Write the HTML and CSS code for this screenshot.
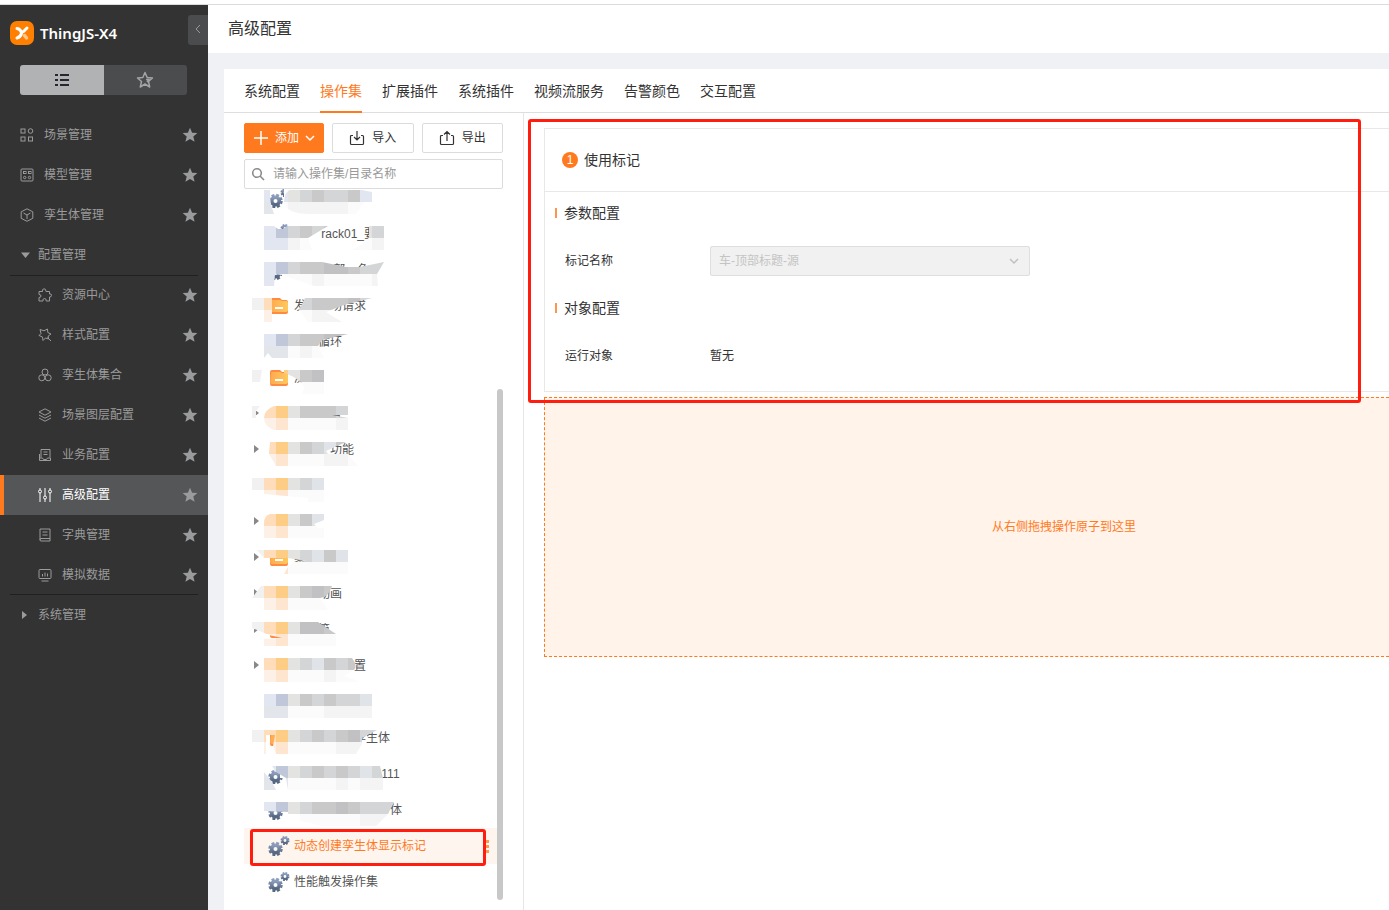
FILE: index.html
```html
<!DOCTYPE html>
<html lang="zh-CN">
<head>
<meta charset="utf-8">
<title>高级配置</title>
<link rel="stylesheet" href="styles.css">
</head>
<body>
<svg class="defs" aria-hidden="true">
  <defs>
    <linearGradient id="steel" x1="0" y1="0" x2="0" y2="1"><stop offset="0" stop-color="#8d9dbd"/><stop offset="1" stop-color="#53647f"/></linearGradient>
    <linearGradient id="amber" x1="0" y1="0" x2="1" y2="0"><stop offset="0" stop-color="#ffa94f"/><stop offset="1" stop-color="#ffc95c"/></linearGradient>
  </defs>
  <symbol id="star" viewBox="0 0 16 16"><path fill="currentColor" d="M8 .7l2.100 5 5.300.4-4.100 3.400 1.300 5.300L8 12l-4.600 2.800 1.300-5.300L.6 6.100l5.300-.4z"/></symbol>
  <symbol id="gears" viewBox="0 0 22 20">
    <g fill="none" stroke="url(#steel)"><circle cx="7.500" cy="13" r="3.800" stroke-width="3.600"/><circle cx="7.500" cy="13" r="5.900" stroke-width="2.600" stroke-dasharray="2.800 1.830"/><circle cx="17" cy="4.500" r="2.400" stroke-width="2"/><circle cx="17" cy="4.500" r="3.700" stroke-width="1.600" stroke-dasharray="1.800 1.100"/></g>
  </symbol>
  <symbol id="folder" viewBox="0 0 18 16"><path fill="#ff8a42" d="M0 2q0-2 2-2h8l2 2h4q2 0 2 2v10q0 2-2 2H2q-2 0-2-2z"/><path fill="url(#amber)" d="M1 3q0-1 1-1h8l2 1h4q2 0 2 2v7q0 2-2 2H2q-2 0-2-2z"/><path stroke="#fff" stroke-width="2" d="M5 10h8"/></symbol>
</svg>

<div class="app">
  <aside class="sidebar">
    <div class="brand">
      <svg class="logo" viewBox="0 0 24 24"><rect width="24" height="24" rx="7" fill="#ff8000"/><path fill="none" stroke="#fff" stroke-width="3" stroke-linecap="round" d="M7 7.500q3.500.5 4.700 4.500Q10.500 16 7 17M13.500 10.500l3.500-3.500"/><path stroke="#ffc58c" stroke-width="3.500" stroke-linecap="round" d="M14.500 14.500l2 2.500"/></svg>
      <span class="brand-name">ThingJS-X4</span>
      <button class="collapse" aria-label="收起"><svg viewBox="0 0 8 10"><path d="M6 1L2 5l4 4"/></svg></button>
    </div>
    <div class="switch">
      <button class="switch-on" aria-label="菜单"><svg viewBox="0 0 16 14" width="16" height="14"><path stroke="#26262e" stroke-width="2" d="M1 2h3M6 2h9M1 7h3M6 7h9M1 12h3M6 12h9"/></svg></button>
      <button aria-label="收藏"><svg viewBox="0 0 18 18" width="18" height="18"><path fill="none" stroke="#a3a4a6" stroke-width="1.500" stroke-linejoin="round" d="M9 1.500l2.200 5 5.300.5-4 3.500 1.200 5.500L9 13l-4.700 3 1.200-5.500-4-3.500 5.300-.5zM10 8.500h3l-2 2.500"/></svg></button>
    </div>
    <nav class="menu">
      <a class="item" href="#"><svg class="ico" viewBox="0 0 14 14"><rect x="1" y="1" width="4" height="4"/><circle cx="10.500" cy="3" r="2.300"/><rect x="1" y="9" width="4" height="4"/><rect x="8.500" y="9" width="4" height="4"/></svg><span>场景管理</span><svg class="star"><use href="#star"/></svg></a>
      <a class="item" href="#"><svg class="ico" viewBox="0 0 14 14"><rect x="1" y="1" width="12" height="12" rx="1"/><rect x="3.500" y="3.500" width="2.500" height="2"/><rect x="8.500" y="3.500" width="2.500" height="2"/><circle cx="4.700" cy="9.500" r="1.200"/><circle cx="9.500" cy="9.500" r="1.200"/></svg><span>模型管理</span><svg class="star"><use href="#star"/></svg></a>
      <a class="item" href="#"><svg class="ico" viewBox="0 0 14 14"><path d="M7 .8l5.800 3v6.500L7 13.300l-5.800-3V3.800zM3.500 5L7 7l3.500-2M7 7v4"/></svg><span>孪生体管理</span><svg class="star"><use href="#star"/></svg></a>
      <a class="item group" href="#"><svg class="caret" viewBox="0 0 10 10"><path d="M1 2.500h9L5.500 8z"/></svg><span>配置管理</span></a>
      <div class="submenu">
        <a class="item" href="#"><svg class="ico" viewBox="0 0 14 14"><path d="M1 3.500h3.500Q4 1 6 .8T8 3.500h3.500V6q2-.5 2 1.300T11.500 9v4H8.200q.3-2.500-1.700-2.500T5 13H1V9.500q2 0 2-1.500T1 6.500z"/></svg><span>资源中心</span><svg class="star"><use href="#star"/></svg></a>
        <a class="item" href="#"><svg class="ico" viewBox="0 0 14 14"><path d="M2 1.500l4 1.300L9.500 1l.3 3.500L13 6l-2.800 2 .3 3-3-1L5 12.500 4.500 9 1 7.500l2-2zM9.500 9.500L13 13"/></svg><span>样式配置</span><svg class="star"><use href="#star"/></svg></a>
        <a class="item" href="#"><svg class="ico" viewBox="0 0 14 14"><circle cx="7" cy="4" r="3"/><circle cx="3.800" cy="9.800" r="3"/><circle cx="10.200" cy="9.800" r="3"/></svg><span>孪生体集合</span><svg class="star"><use href="#star"/></svg></a>
        <a class="item" href="#"><svg class="ico" viewBox="0 0 14 14"><path d="M7 .8l6 3.200-6 3.200L1 4zM1 7l6 3.200L13 7M1 10l6 3.200L13 10"/></svg><span>场景图层配置</span><svg class="star"><use href="#star"/></svg></a>
        <a class="item" href="#"><svg class="ico" viewBox="0 0 14 14"><path d="M3 9.500V1.500h9v8M5.500 4h4M5.500 6.500h4M1.500 6v4M1.500 10h3l1 1.500h3l1-1.500h3v2.500h-11z"/></svg><span>业务配置</span><svg class="star"><use href="#star"/></svg></a>
        <a class="item active" href="#"><svg class="ico" viewBox="0 0 14 14"><path d="M2 0v2M2 5v9M7 0v8M7 11v3M12 0v2M12 5v9"/><circle cx="2" cy="3.500" r="1.500"/><circle cx="7" cy="9.500" r="1.500"/><circle cx="12" cy="3.500" r="1.500"/></svg><span>高级配置</span><svg class="star"><use href="#star"/></svg></a>
        <a class="item" href="#"><svg class="ico" viewBox="0 0 14 14"><path d="M2 12V1h10v12H3q-1 0-1-1 0-1.500 1-1.500h9M4.500 4h5M4.500 7h5"/></svg><span>字典管理</span><svg class="star"><use href="#star"/></svg></a>
        <a class="item" href="#"><svg class="ico" viewBox="0 0 14 14"><rect x="1" y="1.500" width="12" height="9" rx="1"/><path d="M3.500 13h7M4.500 6v2.500M7 4.500v4M9.500 5.500v3"/></svg><span>模拟数据</span><svg class="star"><use href="#star"/></svg></a>
      </div>
      <a class="item group" href="#"><svg class="caret" viewBox="0 0 10 10"><path d="M2 1v8l5-4z"/></svg><span>系统管理</span></a>
    </nav>
  </aside>

  <div class="page">
    <header class="page-head"><h1>高级配置</h1></header>
    <main class="panel">
      <nav class="tabs">
        <a href="#">系统配置</a><a class="current" href="#">操作集</a><a href="#">扩展插件</a><a href="#">系统插件</a><a href="#">视频流服务</a><a href="#">告警颜色</a><a href="#">交互配置</a>
      </nav>
      <div class="split">
        <section class="tree-pane">
          <div class="actions">
            <button class="primary"><svg viewBox="0 0 16 16" width="16" height="16"><path d="M8 1v14M1 8h14"/></svg>添加<svg viewBox="0 0 10 10" width="10" height="10"><path d="M1 3l4 4 4-4"/></svg></button>
            <button><svg viewBox="0 0 16 16" width="16" height="16"><path d="M4 5.500H2.500q-1 0-1 1v7q0 1 1 1h11q1 0 1-1v-7q0-1-1-1H12M8 1v9M5 7l3 3 3-3"/></svg>导入</button>
            <button><svg viewBox="0 0 16 16" width="16" height="16"><path d="M4 5.500H2.500q-1 0-1 1v7q0 1 1 1h11q1 0 1-1v-7q0-1-1-1H12M8 11V2M5 4.500l3-3 3 3"/></svg>导出</button>
          </div>
          <label class="search">
            <svg viewBox="0 0 14 14" width="14" height="14"><circle cx="6" cy="6" r="4.300"/><path d="M9 9l4 4"/></svg>
            <input type="text" placeholder="请输入操作集/目录名称" aria-label="请输入操作集/目录名称">
          </label>
          <div class="tree-wrap">
            <ul class="tree">
              <li><i></i><svg class="gears"><use href="#gears"/></svg><svg class="mask" data-cover="M32-2h8v14h-8z" data-top="-ddfghgghd" data-bottom="-nopppppoo" data-clip="M12 0h6q0 12 2 18l2 6H12zM32 12Q32-2 46-2h54l20 4v10h-8l-8 12H58Q34 24 32 12z"/></svg></li>
              <li><i></i><svg class="gears"><use href="#gears"/></svg><span>　　 rack01_要</span><svg class="mask" data-cover="M12 12h44v12H12z" data-top="-deghghggfgjp" data-bottom="-ddpoopoooppp" data-clip="M12 0h10l4 3h5l4-3H76L56 12 60 24H12zM117 0h15v24h-33q18-8 18-14z"/></svg></li>
              <li><i></i><svg class="gears"><use href="#gears"/></svg><span>　　　 部　色</span><svg class="mask" data-cover="M22-4h14v15H22zM30 12h90v12H30z" data-top="-deghhiihggh" data-bottom="-dooopooooppp" data-clip="M12 0H70L94 5H108L132 0 125 12 126 24H62L30 13 23 12l-1 12H12z"/></svg></li>
              <li><i></i><svg class="folder"><use href="#folder"/></svg><span>发　　场请求</span><svg class="mask" data-top="abcfghhhig" data-bottom="-looopppo" data-clip="M0 0H20V24H12V12H0zM53 0h67L92 7 74 14 90 24H56L47 12z"/></svg></li>
              <li><i></i><span class="no-icon">　　循环</span><svg class="mask" data-top="-deghhiig" data-bottom="-nnopooo" data-clip="M12 0H96L70 6 66 12 72 24H20l-4-5-4 5z"/></svg></li>
              <li><i></i><svg class="folder"><use href="#folder"/></svg><span>测</span><svg class="mask" data-top="abcfhigj" data-bottom="---oooppp" data-clip="M0 0h10L8 12H0zM32 0H72V24H50Q58 12 32 3z"/></svg></li>
              <li><i class="arrow"></i><span class="no-icon">　　　号</span><svg class="mask" data-cover="M4 0h8v5H4zM4 9h8v5H4z" data-top="abcfhhhg" data-bottom="-lmoooop" data-clip="M0 0H8L4 5v7H0zM22 0H96V9H80l16 3V24H22Q12 20 12 12T22 0z"/></svg></li>
              <li><i class="arrow"></i><span class="no-icon">　　　功能</span><svg class="mask" data-top="-bcfhgjhg" data-bottom="-lmoooppop" data-clip="M18 0H94L74 9 76 12H96L106 24H24L17 12z"/></svg></li>
              <li><svg class="mask" data-top="abcfgj" data-bottom="-lmooo" data-clip="M0 0H72V24H56V20L12 16V12H0z"/></svg></li>
              <li><i class="arrow"></i><span class="no-icon">　 -</span><svg class="mask" data-top="-bcfhj" data-bottom="-lmooo" data-clip="M18 0H72V6L62 10l4 4h6V24H12V9Q12 2 18 0z"/></svg></li>
              <li><i class="arrow"></i><svg class="folder"><use href="#folder"/></svg><span>集</span><svg class="mask" data-top="abcfgjhj" data-bottom="--mooooo" data-clip="M5 0H96V24H32L36 17 42 12 54 11 36 8H12z"/></svg></li>
              <li><i class="arrow"></i><span class="no-icon">　　动画</span><svg class="mask" data-top="abcfhih" data-bottom="-lmoooo" data-clip="M9 0H80Q76 12 68 12L76 24H12V12H0z"/></svg></li>
              <li><i class="arrow"></i><svg class="folder"><use href="#folder"/></svg><span>　　篇</span><svg class="mask" data-top="abcfiih" data-bottom="-lmoooo" data-clip="M0 0H66L84 12V24H12V17L30 16 17 13 0 6z"/></svg></li>
              <li><i class="arrow"></i><span class="no-icon">　　　　　置</span><svg class="mask" data-top="-bcfgjhgh" data-bottom="-lmooopoo" data-clip="M12 0H100Q106 8 102 12L92 18 108 24H12V8z"/></svg></li>
              <li><svg class="mask" data-top="-defhghggj" data-bottom="-nnooopppp" data-clip="M12 0H120V24H12z"/></svg></li>
              <li><i></i><svg class="folder"><use href="#folder"/></svg><span>　　　　　孪生体</span><svg class="mask" data-cover="M14 5h4v12h-4z" data-top="abcfghghigg" data-bottom="-lmoooopppo" data-clip="M0 0H125L110 8V14L104 24H24L21 16 23 5H14v19H12V12H0z"/></svg></li>
              <li><i></i><svg class="gears"><use href="#gears"/></svg><span>　　　　　　　 111</span><svg class="mask" data-cover="M12-4H36V2H12zM28 4h10v8H28z" data-top="-defghghgjg" data-bottom="-nnoooopoppp" data-clip="M12 6l8 10 4 8H12zM20 0H128l3 12V24H36L34 12 24 6z"/></svg></li>
              <li><i></i><svg class="gears"><use href="#gears"/></svg><span>　　　　　　　　体</span><svg class="mask" data-cover="M16-4h22v12H16z" data-top="-defghhihgggg" data-bottom="----oooooppp" data-clip="M12 0H142L136 12 124 24H70L36 16V10L12 9z"/></svg></li>
              <li class="selected"><i></i><svg class="gears"><use href="#gears"/></svg><span>动态创建孪生体显示标记</span><button class="more" aria-label="更多"></button><b class="frame"></b></li>
              <li><i></i><svg class="gears"><use href="#gears"/></svg><span>性能触发操作集</span></li>
            </ul>
            <div class="scroll-thumb"></div>
          </div>
        </section>

        <section class="editor">
          <article class="card">
            <header><b class="num">1</b><h2>使用标记</h2></header>
            <div class="card-body">
              <h3>参数配置</h3>
              <div class="field">
                <label for="mark">标记名称</label>
                <div class="select"><select id="mark" disabled><option>车-顶部标题-源</option></select><svg viewBox="0 0 10 10" width="10" height="10"><path d="M1 3l4 4 4-4"/></svg></div>
              </div>
              <h3>对象配置</h3>
              <div class="field"><span>运行对象</span><span>暂无</span></div>
            </div>
          </article>
          <div class="drop">从右侧拖拽操作原子到这里</div>
          <div class="frame frame-large"></div>
        </section>
      </div>
    </main>
  </div>
</div>
<script src="mask.js"></script>
</body>
</html>
```
FILE: styles.css
```css
* { box-sizing: border-box; }
body {
  margin: 0;
  background: #fff;
  color: #333;
  font: 12px/20px "Liberation Sans", "Noto Sans CJK SC", sans-serif;
  overflow: hidden;
}
h1, h2, h3 { margin: 0; font-weight: 400; }
a { color: inherit; text-decoration: none; }
button, input, select { font: inherit; color: inherit; }
.defs { position: absolute; width: 0; height: 0; }
.app { display: flex; height: 100vh; padding-top: 4px; }
.app::before { content: ""; position: absolute; top: 4px; left: 0; right: 0; height: 1px; background: #dcdcdc; }

.sidebar { width: 208px; flex: none; margin-top: 1px; background: #333; color: #9b9b9b; }
.brand { display: flex; align-items: center; height: 60px; padding: 0 0 4px 10px; }
.logo { width: 24px; height: 24px; margin-right: 6px; }
.brand-name { flex: 1; color: #fff; font: 600 15px/20px "Noto Sans", sans-serif; }
.collapse { width: 20px; height: 30px; margin-bottom: 6px; padding: 0; border: 0; border-radius: 3px 0 0 3px; background: #4b4c4e; }
.collapse svg { width: 8px; height: 10px; fill: none; stroke: #999; }
.switch { display: flex; margin: 0 21px 20px 20px; height: 30px; border-radius: 3px; overflow: hidden; }
.switch button { display: flex; flex: 1; align-items: center; justify-content: center; padding: 0; border: 0; background: #4b4c4e; }
.switch .switch-on { background: #b1b2b4; }
.item { display: flex; align-items: center; height: 40px; padding: 0 10px 0 20px; }
.item span { flex: 1; margin-left: 10px; }
.ico { width: 14px; height: 14px; fill: none; stroke: currentColor; }
.star { width: 16px; height: 16px; color: #999b9d; }
.caret { width: 10px; height: 10px; fill: currentColor; }
.group span { margin-left: 8px; }
.submenu { position: relative; }
.submenu::before, .submenu::after { content: ""; position: absolute; left: 10px; right: 10px; height: 1px; background: #202024; }
.submenu::before { top: 0; }
.submenu::after { bottom: 0; }
.submenu .item { padding-left: 38px; }
.submenu .active { padding-left: 34px; border-left: 4px solid #ff7a1e; background: #555658; color: #fff; }

.page { display: flex; flex: 1; flex-direction: column; min-width: 0; margin-top: 1px; background: #f0f1f4; }
.page-head { height: 48px; flex: none; padding: 12px 20px; background: #fff; }
.page-head h1 { font-size: 16px; line-height: 24px; }
.panel { display: flex; flex: 1; flex-direction: column; min-height: 0; margin: 16px 0 0 16px; background: #fff; }
.tabs { display: flex; flex: none; gap: 20px; height: 44px; padding: 0 20px; border-bottom: 1px solid #dedede; font-size: 14px; line-height: 44px; }
.tabs a { height: 44px; }
.tabs .current { border-bottom: 2px solid #ff7a1e; color: #ff7a1e; }
.split { display: flex; flex: 1; min-height: 0; }

.tree-pane { width: 300px; flex: none; padding: 10px 20px 10px; border-right: 1px solid #e6e6e6; }
.actions { display: grid; grid-template-columns: 80px 1fr 1fr; gap: 8px; }
.actions button { display: flex; align-items: center; justify-content: center; gap: 7px; height: 30px; padding: 0; border: 1px solid #dcdcdc; border-radius: 2px; background: #fff; }
.actions svg { fill: none; stroke: currentColor; stroke-width: 1.200; }
.actions .primary { gap: 6px; border-color: #ff7a1e; background: #ff7a1e; color: #fff; }
.actions .primary svg { stroke-width: 1.500; }
.search { display: flex; align-items: center; gap: 8px; height: 30px; margin-top: 6px; padding: 0 6px; border: 1px solid #dcdcdc; border-radius: 2px; }
.search svg { fill: none; stroke: #8a8a8a; stroke-width: 1.600; }
.search input { flex: 1; min-width: 0; padding: 0; border: 0; outline: 0; background: none; }
.search input::placeholder { color: #999; opacity: 1; }
.tree-wrap { position: relative; }
.tree { margin: 0; padding: 0; list-style: none; overflow: hidden; }
.tree li { position: relative; display: flex; align-items: center; height: 36px; color: #555; white-space: pre; }
.tree li:first-child { margin-top: -9px; }
.tree i { width: 24px; height: 10px; flex: none; }
.arrow::before { content: ""; display: block; width: 0; margin-left: 10px; border: 4px solid transparent; border-left: 5px solid #888; border-right: 0; }
.gears { width: 22px; height: 20px; margin-right: 4px; flex: none; }
.folder { width: 18px; height: 16px; margin: 0 6px 0 2px; flex: none; }
.no-icon { margin-left: 26px; }
.mask { position: absolute; left: 8px; top: 10px; width: 160px; height: 26px; overflow: visible; }
.tree .selected { margin-right: 6px; background: #fff5ef; color: #ff7a1e; }
.more { width: 3px; height: 13px; margin-left: auto; margin-right: 8px; padding: 0; border: 0; background: repeating-linear-gradient(#ff9a55 0 3px, transparent 3px 5px); }
.scroll-thumb { position: absolute; right: 0; top: 200px; bottom: 0; width: 6px; border-radius: 3px; background: #c8c8c8; }
.frame { position: absolute; border: 3px solid #ff1d10; border-radius: 3px; pointer-events: none; }
.selected .frame { left: 6px; right: 11px; top: 1px; height: 37px; z-index: 1; }

.editor { position: relative; flex: 1; min-width: 0; padding: 15px 0 0 20px; }
.card { border: 1px solid #e8e8e8; border-right: 0; }
.card > header { display: flex; align-items: center; gap: 6px; height: 63px; padding-left: 17px; border-bottom: 1px solid #e8e8e8; }
.num { width: 16px; height: 16px; border-radius: 50%; background: #ff7a1e; color: #fff; font-weight: 400; line-height: 16px; text-align: center; }
.card h2, .card h3 { font-size: 14px; line-height: 20px; }
.card-body { padding: 11px 10px 20px; }
.card h3 { display: flex; align-items: center; gap: 7px; }
.card h3::before { content: ""; width: 2px; height: 10px; background: #ff944a; }
.field { display: grid; grid-template-columns: 145px 320px; align-items: center; height: 30px; margin: 23px 0 22px 10px; }
.field:last-child { margin-bottom: 0; }
.select { position: relative; }
.select select { display: block; width: 100%; height: 30px; padding: 0 8px; border: 1px solid #dedede; border-radius: 2px; background: #f1f1f1; color: #c4c4c4; opacity: 1; appearance: none; }
.select svg { position: absolute; right: 11px; top: 10px; fill: none; stroke: #c0c0c0; stroke-width: 1.500; }
.drop { display: flex; align-items: center; justify-content: center; height: 260px; margin-top: 5px; padding-left: 194px; border: 1px dashed #ff7a1e; border-right: 0; background: #fff3ea; color: #ff7a1e; }
.frame-large { left: 4px; right: 28px; top: 6px; height: 284px; }
```
FILE: mask.js
```javascript
// Fills each redaction mask with two rows of 12px colour cells.
const palette = {
  a: '#f1f1f1', b: '#ffdcba', c: '#fdcd85', d: '#e2e6f0', e: '#bfc7d8',
  f: '#e3e3e2', g: '#d4d5d6', h: '#c9c9ca', i: '#c1c0c2', j: '#e0e4e8',
  l: '#fdf0e7', m: '#fee5d0', n: '#e2e5ea', o: '#fbfbfb', p: '#f4f4f4'
};
const ns = 'http://www.w3.org/2000/svg';
document.querySelectorAll('.mask').forEach((svg, index) => {
  if (svg.dataset.cover) {
    const cover = document.createElementNS(ns, 'path');
    cover.setAttribute('d', svg.dataset.cover);
    cover.setAttribute('fill', '#fff');
    svg.append(cover);
  }
  const clip = document.createElementNS(ns, 'clipPath');
  const shape = document.createElementNS(ns, 'path');
  const group = document.createElementNS(ns, 'g');
  clip.id = 'mask-' + index;
  shape.setAttribute('d', svg.dataset.clip);
  clip.append(shape);
  group.setAttribute('clip-path', 'url(#' + clip.id + ')');
  [svg.dataset.top, svg.dataset.bottom].forEach((line, row) => {
    [...line].forEach((key, column) => {
      if (!palette[key]) return;
      const cell = document.createElementNS(ns, 'rect');
      cell.setAttribute('x', column * 12);
      cell.setAttribute('y', row * 12);
      cell.setAttribute('width', 12);
      cell.setAttribute('height', 12);
      cell.setAttribute('fill', palette[key]);
      group.append(cell);
    });
  });
  svg.append(clip, group);
});
```
